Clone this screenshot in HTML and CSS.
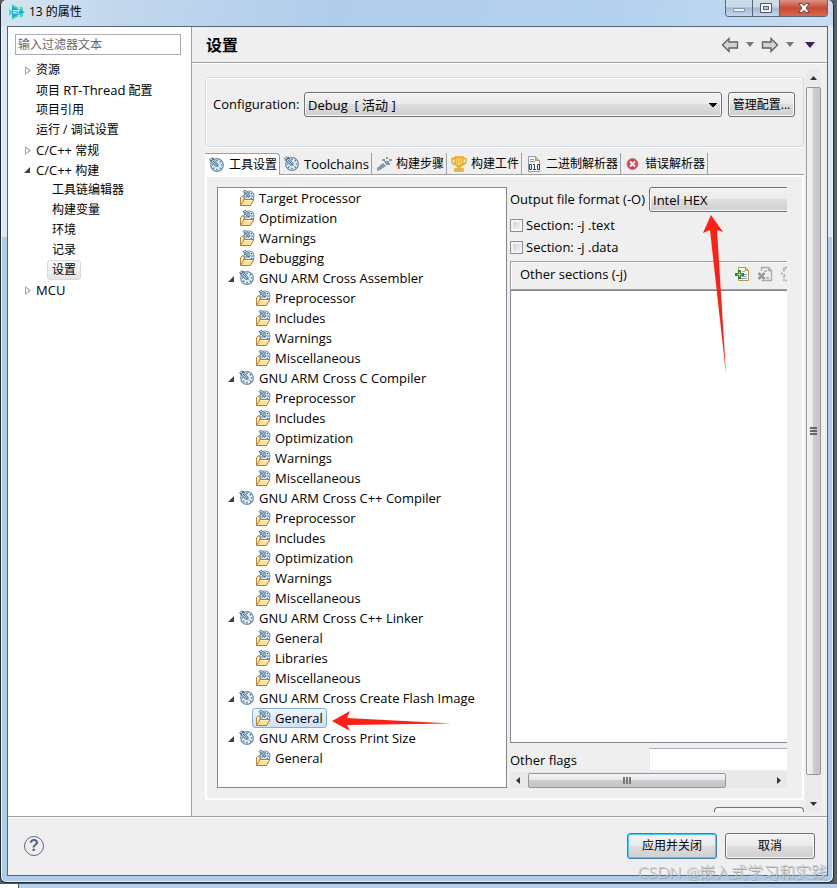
FILE: index.html
```html
<!DOCTYPE html>
<html lang="zh-CN">
<head>
<meta charset="utf-8">
<meta name="viewport" content="width=device-width, initial-scale=1">
<title>13 的属性</title>
<link rel="stylesheet" href="styles.css">
</head>
<body>
<svg class="sprite" aria-hidden="true">
  <symbol id="tool" viewBox="0 0 16 16">
    <circle cx="8" cy="8" r="6.300" fill="#e3f1f9" stroke="#6f93ad" stroke-width="1.300"/>
    <path d="M8 2.800v1.500M8 11.700v1.500M2.800 8h1.500M11.700 8h1.500M11.700 4.300l-1 1M4.300 11.700l1-1M11.700 11.700l-1-1" stroke="#27597f" stroke-width="1.200"/>
    <path d="M1.500 1.500l7 7.500" stroke="#4d7592" stroke-width="4"/>
    <path d="M2 2l6 6.500" stroke="#dbe9f2" stroke-width="2"/>
    <path d="M1.500 4.500L5 1M3.500 3.500l6 6.500" fill="none" stroke="#3b6484" stroke-width="1"/>
  </symbol>
  <symbol id="folder" viewBox="0 0 16 16">
    <circle cx="10" cy="6" r="5" fill="#e3f1f9" stroke="#6f93ad" stroke-width="1.100"/>
    <path d="M10 2v1.500M13.800 6h-1.500M12.800 3.200l-1 1M12.800 8.800l-1-1M6.500 7h1.500" stroke="#27597f" stroke-width="1.100"/>
    <path d="M5 .5l5.500 6.500" stroke="#4d7592" stroke-width="3.400"/>
    <path d="M5.500 1l4.500 5.500" stroke="#dbe9f2" stroke-width="1.600"/>
    <path d="M6 2l4 5" stroke="#3b6484" stroke-width=".8"/>
    <path d="M1.500 15V7.500L3 6h2v4" fill="#fff0b8" stroke="#b98235"/>
    <path d="M1.500 15.500L5 9.500h10L11.500 15.500z" fill="#ffdf91" stroke="#b57835"/>
    <path d="M5.500 10.500h7.800" stroke="#fff5cf"/>
  </symbol>
</svg>

<div class="desktop">
  <div class="window">
    <header class="titlebar">
      <svg class="app-icon" viewBox="0 0 16 16" aria-hidden="true">
        <path d="M3 0l7 4-7 3zM3 16l7-4-7-3zM12 3v10" fill="#43dba8"/>
        <path d="M0 5l4 3-4 4zM11 2l3 2v8l-3 2z" fill="#43dba8"/>
        <path d="M3 2.500L16 8 3 13.500z" fill="#10b0dc"/>
        <text x="4" y="10" class="app-letters">RT</text>
      </svg>
      <h1>13 的属性</h1>
      <div class="caption">
        <button type="button" aria-label="最小化"><svg viewBox="0 0 14 12"><path d="M1.500 6.500h11v3h-11z" fill="#eef3f8" stroke="#8496a9"/></svg></button>
        <button type="button" aria-label="最大化"><svg viewBox="0 0 14 12"><path d="M1.500 1.500h11v9h-11z" fill="#fff" stroke="#4b5970"/><path d="M4.500 4.500h5v3h-5z" fill="#b8cce2" stroke="#4b5970"/></svg></button>
        <button type="button" class="close" aria-label="关闭"><svg viewBox="0 0 14 12"><path d="M1.500 1.500h3.500L7 3.700l2-2.200h3.500L9 6l3.500 4.500H9L7 8.300l-2 2.200H1.500L5 6z" fill="#fff" stroke="#5c4957"/></svg></button>
      </div>
    </header>

    <div class="client">
      <nav class="sidebar" aria-label="属性页">
        <input class="filter" type="text" placeholder="输入过滤器文本" aria-label="输入过滤器文本">
        <ul class="pages">
          <li><a href="#" class="closed">资源</a></li>
          <li><a href="#">项目 <span>RT-Thread</span> 配置</a></li>
          <li><a href="#">项目引用</a></li>
          <li><a href="#">运行 / 调试设置</a></li>
          <li><a href="#" class="closed"><span>C/C++</span> 常规</a></li>
          <li><a href="#" class="open"><span>C/C++</span> 构建</a>
            <ul>
              <li><a href="#">工具链编辑器</a></li>
              <li><a href="#">构建变量</a></li>
              <li><a href="#">环境</a></li>
              <li><a href="#">记录</a></li>
              <li><a href="#" class="current" aria-current="page">设置</a></li>
            </ul>
          </li>
          <li><a href="#" class="closed"><span>MCU</span></a></li>
        </ul>
      </nav>

      <main class="content">
        <div class="heading">
          <h2>设置</h2>
          <div class="history">
            <button type="button" aria-label="后退"><svg class="arrow" viewBox="0 0 18 16"><path d="M1.500 8L8 1.500V5h8.500v6H8v3.500z" fill="#d2d2d2" stroke="#606060" stroke-width="1.300"/></svg></button>
            <button type="button" aria-label="后退历史"><svg class="drop" viewBox="0 0 8 5"><path d="M0 0h8L4 5z" fill="#777"/></svg></button>
            <button type="button" aria-label="前进"><svg class="arrow" viewBox="0 0 18 16"><path d="M16.500 8L10 1.500V5H1.500v6H10v3.500z" fill="#d2d2d2" stroke="#606060" stroke-width="1.300"/></svg></button>
            <button type="button" aria-label="前进历史"><svg class="drop" viewBox="0 0 8 5"><path d="M0 0h8L4 5z" fill="#777"/></svg></button>
            <button type="button" aria-label="菜单"><svg class="menu" viewBox="0 0 10 6"><path d="M0 0h10L5 6z" fill="#3c1c60"/></svg></button>
          </div>
        </div>

        <div class="scroller">
          <div class="page">
            <section class="config">
              <label for="configuration">Configuration:</label>
              <select id="configuration"><option>Debug&nbsp; [ 活动 ]</option></select>
              <button type="button" class="button">管理配置...</button>
            </section>

            <div class="tabs" role="tablist">
              <button type="button" role="tab" aria-selected="true"><svg class="icon"><use href="#tool"/></svg>工具设置</button>
              <button type="button" role="tab"><svg class="icon"><use href="#tool"/></svg><span>Toolchains</span></button>
              <button type="button" role="tab"><svg class="icon" viewBox="0 0 16 16"><path d="M1 15v-3l6-5 3 3-6 4zM6 3h3v2H6zM8 5h5v4h-3zM10 1h2v2h-2zM13 3h3v2h-3zM12 7h2v2h-2z" fill="#7f98ae"/></svg>构建步骤</button>
              <button type="button" role="tab"><svg class="icon" viewBox="0 0 16 16"><path d="M4 1h8v6l-2 3H6L4 7z" fill="#ffd56a" stroke="#e8a21c" stroke-width="1.300"/><path d="M4 2.500H1v4l2 2h2M12 2.500h3v4l-2 2h-2M7 10v3M9 10v3M4 15v-2h8v2z" fill="none" stroke="#e8a21c" stroke-width="1.300"/><path d="M6.500 2v6M9.500 2v6" stroke="#f0b030"/></svg>构建工件</button>
              <button type="button" role="tab"><svg class="icon" viewBox="0 0 16 16"><path d="M2.500 15.500V.5h7l4 4v11z" fill="#f6faff" stroke="#8a9bad"/><path d="M9.500.5v4h4" fill="#e3bd65" stroke="#b69a5b"/><path d="M4 3.500h4M4 5.500h5" stroke="#6f9fd4"/><path d="M3.500 8.500h2v5h-2zM7 8.500h1.500v5M7 13.500h3M11.500 8.500h2v5h-2z" fill="#fff" stroke="#244566"/></svg>二进制解析器</button>
              <button type="button" role="tab"><svg class="icon" viewBox="0 0 16 16"><circle cx="7.500" cy="8" r="5.500" fill="#dc3f4b" stroke="#c57a82"/><path d="M5 5.500l5 5M10 5.500l-5 5" stroke="#fff" stroke-width="1.900"/></svg>错误解析器</button>
            </div>

            <div class="tabpage" role="tabpanel">
              <ul class="tools">
                <li><a href="#"><svg class="icon"><use href="#folder"/></svg>Target Processor</a></li>
                <li><a href="#"><svg class="icon"><use href="#folder"/></svg>Optimization</a></li>
                <li><a href="#"><svg class="icon"><use href="#folder"/></svg>Warnings</a></li>
                <li><a href="#"><svg class="icon"><use href="#folder"/></svg>Debugging</a></li>
                <li><a href="#" class="open"><svg class="icon"><use href="#tool"/></svg>GNU ARM Cross Assembler</a>
                  <ul>
                    <li><a href="#"><svg class="icon"><use href="#folder"/></svg>Preprocessor</a></li>
                    <li><a href="#"><svg class="icon"><use href="#folder"/></svg>Includes</a></li>
                    <li><a href="#"><svg class="icon"><use href="#folder"/></svg>Warnings</a></li>
                    <li><a href="#"><svg class="icon"><use href="#folder"/></svg>Miscellaneous</a></li>
                  </ul>
                </li>
                <li><a href="#" class="open"><svg class="icon"><use href="#tool"/></svg>GNU ARM Cross C Compiler</a>
                  <ul>
                    <li><a href="#"><svg class="icon"><use href="#folder"/></svg>Preprocessor</a></li>
                    <li><a href="#"><svg class="icon"><use href="#folder"/></svg>Includes</a></li>
                    <li><a href="#"><svg class="icon"><use href="#folder"/></svg>Optimization</a></li>
                    <li><a href="#"><svg class="icon"><use href="#folder"/></svg>Warnings</a></li>
                    <li><a href="#"><svg class="icon"><use href="#folder"/></svg>Miscellaneous</a></li>
                  </ul>
                </li>
                <li><a href="#" class="open"><svg class="icon"><use href="#tool"/></svg>GNU ARM Cross C++ Compiler</a>
                  <ul>
                    <li><a href="#"><svg class="icon"><use href="#folder"/></svg>Preprocessor</a></li>
                    <li><a href="#"><svg class="icon"><use href="#folder"/></svg>Includes</a></li>
                    <li><a href="#"><svg class="icon"><use href="#folder"/></svg>Optimization</a></li>
                    <li><a href="#"><svg class="icon"><use href="#folder"/></svg>Warnings</a></li>
                    <li><a href="#"><svg class="icon"><use href="#folder"/></svg>Miscellaneous</a></li>
                  </ul>
                </li>
                <li><a href="#" class="open"><svg class="icon"><use href="#tool"/></svg>GNU ARM Cross C++ Linker</a>
                  <ul>
                    <li><a href="#"><svg class="icon"><use href="#folder"/></svg>General</a></li>
                    <li><a href="#"><svg class="icon"><use href="#folder"/></svg>Libraries</a></li>
                    <li><a href="#"><svg class="icon"><use href="#folder"/></svg>Miscellaneous</a></li>
                  </ul>
                </li>
                <li><a href="#" class="open"><svg class="icon"><use href="#tool"/></svg>GNU ARM Cross Create Flash Image</a>
                  <ul>
                    <li class="marked"><a href="#" class="selected"><svg class="icon"><use href="#folder"/></svg>General</a>
                      <svg class="pointer-left" viewBox="0 0 120 22" aria-hidden="true"><path d="M0 11L18 1l-3 7 104 5.500L15 15l3 6z" fill="#ff2015"/></svg>
                    </li>
                  </ul>
                </li>
                <li><a href="#" class="open"><svg class="icon"><use href="#tool"/></svg>GNU ARM Cross Print Size</a>
                  <ul>
                    <li><a href="#"><svg class="icon"><use href="#folder"/></svg>General</a></li>
                  </ul>
                </li>
              </ul>

              <div class="options">
                <div class="viewport">
                  <form class="form">
                    <div class="field format">
                      <label for="format">Output file format (-O)</label>
                      <select id="format"><option>Intel HEX</option></select>
                      <svg class="pointer-up" viewBox="0 0 26 160" aria-hidden="true"><path d="M9 0l12 17-6-2 9 144L8 15l-7 3z" fill="#ff2015"/></svg>
                    </div>
                    <label class="check"><input type="checkbox">Section: -j .text</label>
                    <label class="check"><input type="checkbox">Section: -j .data</label>
                    <div class="listhead">
                      <span class="listname">Other sections (-j)</span>
                      <button type="button" aria-label="添加"><svg class="icon" viewBox="0 0 16 16"><path d="M4.500 14.500V1.500h7l3 3v10z" fill="#fffdf2" stroke="#b69449"/><path d="M11.500 1.500v3h3" fill="#e8c36e" stroke="#b69449"/><path d="M8 5.500h3M9 8.500h4M8 10.500h5M7 12.500h6" stroke="#8aa8d1"/><path d="M4 4h3v3h3v3H7v3H4v-3H1V7h3z" fill="#348326"/><path d="M5.500 6v5M3 8.500h5" stroke="#a9df83"/></svg></button>
                      <button type="button" aria-label="删除"><svg class="icon" viewBox="0 0 16 16"><path d="M4.500 5V1.500h7l3 3v10h-10M11.500 1.500v3h3M7 5h3M9 12h3" fill="none" stroke="#aaa" stroke-width="1.300"/><path d="M1.500 7l6 6M7.500 7l-6 6" stroke="#999" stroke-width="2.500"/></svg></button>
                      <button type="button" aria-label="编辑"><svg class="icon" viewBox="0 0 16 16"><path d="M7 1.500H4v4M4 10v4.500h8M1 7l5 3M3 5l3-2" fill="none" stroke="#aaa" stroke-width="1.500" stroke-dasharray="2 1"/></svg></button>
                    </div>
                    <div class="listbox" role="listbox" aria-label="Other sections (-j)"></div>
                    <div class="field flags">
                      <label for="flags">Other flags</label>
                      <input id="flags" type="text">
                    </div>
                  </form>
                </div>
                <div class="hbar" aria-hidden="true">
                  <svg viewBox="0 0 4 7"><path d="M4 0v7L0 3.500z" fill="#333"/></svg>
                  <div class="htrack"><div class="thumb"><i></i><i></i><i></i></div></div>
                  <svg viewBox="0 0 4 7"><path d="M0 0v7l4-3.500z" fill="#333"/></svg>
                </div>
              </div>
            </div>
            <div class="more"><div class="cut"></div></div>
          </div>

          <div class="vbar" aria-hidden="true">
            <svg viewBox="0 0 7 4"><path d="M0 4h7L3.500 0z" fill="#333"/></svg>
            <div class="thumb"><i></i><i></i><i></i></div>
            <svg viewBox="0 0 7 4"><path d="M0 0h7L3.500 4z" fill="#333"/></svg>
          </div>
        </div>
      </main>

      <footer class="footer">
        <button type="button" class="help" aria-label="帮助">?</button>
        <button type="button" class="button primary">应用并关闭</button>
        <button type="button" class="button">取消</button>
      </footer>
    </div>
  </div>
  <div class="taskbar"></div>
  <div class="watermark">CSDN @嵌入式学习和实践</div>
</div>
</body>
</html>
```
FILE: styles.css
```css
* { box-sizing: border-box; }

body {
  margin: 0;
  background: #5c6067;
  color: #000;
  font: 12px/20px "Open Sans", "Noto Sans CJK SC", sans-serif;
}

button, input, select { font: inherit; color: inherit; margin: 0; }
button { padding: 0; border: 0; background: none; }
ul { list-style: none; margin: 0; padding: 0; }
a { color: inherit; text-decoration: none; }
h1, h2 { margin: 0; }
svg { display: block; flex: none; }

.sprite { position: absolute; width: 0; height: 0; }
.icon { width: 16px; height: 16px; }

.desktop {
  position: relative;
  display: flex;
  flex-direction: column;
  height: 100vh;
  min-height: 888px;
}

/* Window frame */
.window {
  flex: 1;
  display: flex;
  flex-direction: column;
  min-height: 0;
  margin-right: 3px;
  padding: 0 5px 6px 6px;
  border: 1px solid #23292f;
  border-top: 0;
  border-radius: 6px;
  background: linear-gradient(#dce8f5 237px, #adcceb 237px);
  box-shadow: inset 1px 0 #eef7ff, inset -1px -1px #dff3ff;
}

.taskbar {
  height: 5px;
  border-top: 1px solid #4b5663;
  background: linear-gradient(90deg, #fff 18px, #555 18px 19px, #b4cfeb 19px);
}

.titlebar {
  display: flex;
  align-items: flex-start;
  height: 26px;
  margin: 0 -5px 0 -6px;
  padding: 0 5px 0 8px;
  border-radius: 6px 6px 0 0;
  background: linear-gradient(100deg, #d7e4f2, #c2d7ed 14%, #b1cdeb 40%, #b4d1ee 75%, #c8ddf2);
}
.titlebar h1 { flex: 1; margin-left: 4px; font-size: 12px; font-weight: 400; line-height: 24px; }
.app-icon { width: 16px; height: 16px; margin-top: 4px; }
.app-letters { font: bold 5px "Liberation Sans", sans-serif; fill: #fff; }

.caption {
  display: flex;
  height: 17px;
  border: 1px solid #586577;
  border-top: 0;
  border-radius: 0 0 4px 4px;
  overflow: hidden;
}
.caption button {
  display: grid;
  place-items: center;
  width: 27px;
  border-right: 1px solid #586577;
  background: linear-gradient(#cbdbea 40%, #a4bad2 50%, #c3d8ee);
}
.caption .close { width: 47px; border: 0; background: linear-gradient(#dc9483, #c84a35 50%, #d9674a); }
.caption svg { width: 14px; height: 12px; }

.client {
  flex: 1;
  display: grid;
  grid-template: minmax(0, 1fr) 59px / 184px minmax(0, 1fr);
  min-height: 0;
  border: 1px solid #566575;
  background: #efefef;
}

/* Page list */
.sidebar { padding: 7px 10px 0 7px; border-right: 1px solid #a0a0a0; background: #fff; }
.filter { display: block; width: 100%; height: 21px; padding: 0 2px; border: 1px solid #abadb3; background: #fff; }
.filter::placeholder { color: #666; opacity: 1; }
.pages { margin-top: 5px; padding-left: 19px; }
.pages span { font-size: 13px; }
.pages ul { padding-left: 16px; }
.pages a { position: relative; display: block; width: max-content; height: 20px; padding: 0 2px; white-space: nowrap; }
.pages .current {
  margin-left: -3px;
  padding: 0 4px;
  border: 1px solid #d9d9d9;
  border-radius: 3px;
  line-height: 18px;
  background: linear-gradient(#fafafa, #e5e5e5);
}

.closed::before {
  content: "";
  position: absolute;
  left: -9px;
  top: 6px;
  width: 6px;
  height: 9px;
  background: #a6a6a6;
  clip-path: polygon(0 0, 100% 50%, 0 100%, 0 0, 1px 2px, 1px 7px, 4px 50%, 1px 2px);
}
.open::before {
  content: "";
  position: absolute;
  left: -10px;
  top: 7px;
  width: 6px;
  height: 6px;
  background: #404040;
  clip-path: polygon(100% 0, 100% 100%, 0 100%);
}

/* Settings header */
.content { display: flex; flex-direction: column; min-width: 0; min-height: 0; }
.heading {
  display: flex;
  align-items: center;
  height: 36px;
  padding: 0 12px 0 14px;
  border-bottom: 1px solid #a0a0a0;
  box-shadow: 0 1px #fff;
}
.heading h2 { flex: 1; font-size: 16px; font-weight: 700; }
.history { display: flex; align-items: center; gap: 7px; }
.arrow { width: 18px; height: 16px; }
.drop { width: 8px; height: 5px; }
.menu { width: 10px; height: 6px; margin-left: 4px; }

.scroller { flex: 1; display: flex; min-height: 0; padding: 6px 6px 4px 13px; }
.page { flex: 1; display: flex; flex-direction: column; min-width: 0; padding-top: 8px; }

.config {
  display: flex;
  align-items: flex-start;
  height: 70px;
  padding: 14px 8px 0 7px;
  border: 1px solid #d0dce6;
  border-radius: 3px;
  box-shadow: inset 1px 1px #fff, 0 1px #fff;
}
.config label { width: 91px; font-size: 13px; line-height: 24px; }
.config .button { width: 67px; height: 25px; margin-left: 6px; }

select {
  appearance: none;
  height: 25px;
  min-width: 0;
  padding: 0 3px;
  border: 1px solid #707070;
  border-radius: 3px;
  background: linear-gradient(#f2f2f2, #ebebeb 48%, #dddddd 50%, #cfcfcf);
  box-shadow: inset 0 0 0 1px #fafafa;
  font-size: 13px;
}
.config select {
  flex: 1;
  background:
    conic-gradient(from -53deg at 50% 100%, #000 106deg, transparent 0) right 4px top 10px / 8px 4px no-repeat,
    linear-gradient(#f2f2f2, #ebebeb 48%, #dddddd 50%, #cfcfcf);
}

.button {
  border: 1px solid #707070;
  border-radius: 3px;
  background: linear-gradient(#f2f2f2, #ebebeb 48%, #dddddd 50%, #cfcfcf);
  box-shadow: inset 0 0 0 1px #fbfbfb;
  line-height: 20px;
  white-space: nowrap;
}

/* Tabs */
.tabs { display: flex; height: 22px; margin-top: 6px; border-bottom: 1px solid #a0a0a0; }
.tabs button {
  display: flex;
  align-items: center;
  gap: 4px;
  height: 21px;
  padding: 0 2px 0 4px;
  border-right: 1px solid #a0a0a0;
  white-space: nowrap;
}
.tabs span { font-size: 13px; }
.tabs [aria-selected] { height: 22px; border-top: 1px solid #a0a0a0; border-radius: 0 4px 0 0; background: #fff; }

.tabpage {
  flex: 1;
  display: grid;
  grid-template-columns: minmax(0, 290fr) minmax(0, 277fr);
  gap: 3px;
  min-height: 0;
  padding: 10px 15px 10px 10px;
  border: 2px solid #fff;
  font-size: 13px;
}

.tools { padding: 0 0 0 18px; border: 1px solid #828790; background: #fff; }
.tools ul { padding-left: 16px; }
.tools a {
  position: relative;
  display: flex;
  align-items: center;
  gap: 4px;
  width: max-content;
  height: 20px;
  padding: 0 3px 0 2px;
  border: 1px solid transparent;
  border-radius: 3px;
  white-space: nowrap;
}
.tools a.open::before { left: -9px; }
.tools .selected { border-color: #84acdd; background: linear-gradient(#eef5fe, #cde1fb); }
.marked { position: relative; }
.pointer-left { position: absolute; left: 80px; top: 2px; width: 120px; height: 22px; }

/* Tool options */
.options { display: flex; flex-direction: column; min-width: 0; }
.viewport { flex: 1; overflow: hidden; }
.form { display: flex; flex-direction: column; width: 125%; height: 100%; }
.field { display: grid; grid-template-columns: 139px 1fr; line-height: 24px; }
.format { position: relative; height: 25px; margin-bottom: 2px; }
.pointer-up { position: absolute; left: 192px; top: 28px; width: 26px; height: 160px; }
.check { display: flex; align-items: center; gap: 3px; height: 22px; }
.check input {
  appearance: none;
  width: 13px;
  height: 13px;
  border: 1px solid #8e8f8f;
  background: linear-gradient(135deg, #cbcfd5, #f6f6f6);
  box-shadow: inset 0 0 0 2px #f4f4f4;
}
.listhead {
  display: flex;
  align-items: center;
  gap: 7px;
  height: 29px;
  margin-top: 3px;
  padding: 0 0 3px 9px;
  border: 1px solid #a0a0a0;
  border-right: 0;
  box-shadow: inset 1px 1px #fff;
}
.listname { width: 207px; }
.listbox { flex: 1; border: 1px solid #828790; background: #fff; }
.flags { height: 23px; margin: 5px 0 1px; }
.flags input { height: 23px; min-width: 0; border: 1px solid #e3e9ef; border-top-color: #abadb3; background: #fff; }

/* Scroll bars */
.thumb { display: flex; align-items: center; justify-content: center; gap: 1px; border: 1px solid #979797; border-radius: 2px; }
.hbar { display: flex; align-items: center; height: 16px; padding: 0 6px; background: #e9e9e9; }
.hbar svg { width: 4px; height: 7px; }
.htrack { flex: 1; margin: 0 8px; }
.hbar .thumb { width: 82%; height: 15px; background: linear-gradient(#f5f5f5, #e8e8eb 48%, #cdcdd2 50%, #c2c2c8); }
.hbar i { width: 2px; height: 7px; background: #77777c; }
.vbar { display: flex; flex-direction: column; align-items: center; width: 15px; margin-left: 2px; padding: 7px 0 6px; background: #eaeaea; }
.vbar svg { width: 7px; height: 4px; }
.vbar .thumb {
  flex: 1;
  flex-direction: column;
  width: 15px;
  margin: 7px 0 27px;
  background: linear-gradient(90deg, #f5f5f5, #e8e8eb 48%, #cdcdd2 50%, #c2c2c8);
}
.vbar i { width: 7px; height: 2px; background: #66666b; }

.more { display: flex; justify-content: flex-end; height: 12px; padding: 7px 0 0; }
.cut { width: 90px; border: 1px solid #707070; border-bottom: 0; border-radius: 4px 4px 0 0; background: #f5f5f5; }

/* Dialog buttons */
.footer {
  grid-column: 1 / -1;
  display: flex;
  align-items: center;
  gap: 8px;
  padding: 0 12px 0 16px;
  border-top: 1px solid #a0a0a0;
  box-shadow: inset 0 1px #fff;
}
.footer .button { width: 90px; height: 26px; }
.footer .primary { border-color: #3c7fb1; box-shadow: inset 0 0 0 1px #48d0f4; }
.help {
  width: 20px;
  height: 20px;
  margin-right: auto;
  border: 1px solid #566789;
  border-radius: 50%;
  color: #50648a;
  font: bold 16px/18px "Liberation Sans", sans-serif;
}

.watermark {
  position: absolute;
  right: 10px;
  bottom: 6px;
  color: #c9ccd0;
  font: 300 16px/20px Lato, "Noto Sans CJK SC", sans-serif;
  text-shadow: 1px 1px #9a9ea4;
  white-space: nowrap;
}
```
